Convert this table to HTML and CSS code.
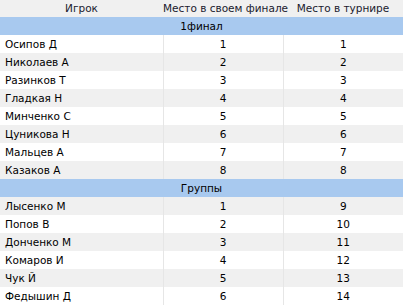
FILE: index.html
```html
<!DOCTYPE html>
<html>
<head>
<meta charset="utf-8">
<link rel="stylesheet" href="styles.css">
</head>
<body>
<table class="results">
  <colgroup>
    <col class="c-name">
    <col class="c-place">
    <col class="c-total">
  </colgroup>
  <thead>
    <tr class="head"><th>Игрок</th><th>Место в своем финале</th><th>Место в турнире</th></tr>
  </thead>
  <tbody>
    <tr class="group"><td colspan="3">1финал</td></tr>
    <tr><td class="name">Осипов Д</td><td>1</td><td>1</td></tr>
    <tr class="alt"><td class="name">Николаев А</td><td>2</td><td>2</td></tr>
    <tr><td class="name">Разинков Т</td><td>3</td><td>3</td></tr>
    <tr class="alt"><td class="name">Гладкая Н</td><td>4</td><td>4</td></tr>
    <tr><td class="name">Минченко С</td><td>5</td><td>5</td></tr>
    <tr class="alt"><td class="name">Цуникова Н</td><td>6</td><td>6</td></tr>
    <tr><td class="name">Мальцев А</td><td>7</td><td>7</td></tr>
    <tr class="alt"><td class="name">Казаков А</td><td>8</td><td>8</td></tr>
    <tr class="group"><td colspan="3">Группы</td></tr>
    <tr class="alt"><td class="name">Лысенко М</td><td>1</td><td>9</td></tr>
    <tr><td class="name">Попов В</td><td>2</td><td>10</td></tr>
    <tr class="alt"><td class="name">Донченко М</td><td>3</td><td>11</td></tr>
    <tr><td class="name">Комаров И</td><td>4</td><td>12</td></tr>
    <tr class="alt"><td class="name">Чук Й</td><td>5</td><td>13</td></tr>
    <tr><td class="name">Федышин Д</td><td>6</td><td>14</td></tr>
  </tbody>
</table>
</body>
</html>
```

FILE: styles.css
```css
html, body {
  margin: 0;
  padding: 0;
  background: #ffffff;
}
.results {
  width: 403px;
  border-collapse: collapse;
  table-layout: fixed;
  font-family: "DejaVu Sans", sans-serif;
  font-size: 10.5px;
  color: #000000;
}
.c-name { width: 163px; }
.c-place { width: 120px; }
.c-total { width: 120px; }
.results th,
.results td {
  height: 18px;
  padding: 0;
  text-align: center;
  vertical-align: middle;
  white-space: nowrap;
  border-left: 1px solid #e6e6e6;
  line-height: 18px;
}
.results th:first-child,
.results td:first-child {
  border-left: none;
}
.head th {
  background: #f0f0f0;
  font-weight: normal;
  color: #1a1a2e;
  border-left: none;
  height: 17px;
  line-height: 17px;
}
.group td {
  background: #a8c9ef;
  border-left: none;
}
.alt td {
  background: #f0f0f0;
}
.results td.name {
  text-align: left;
  padding-left: 5px;
}
```
